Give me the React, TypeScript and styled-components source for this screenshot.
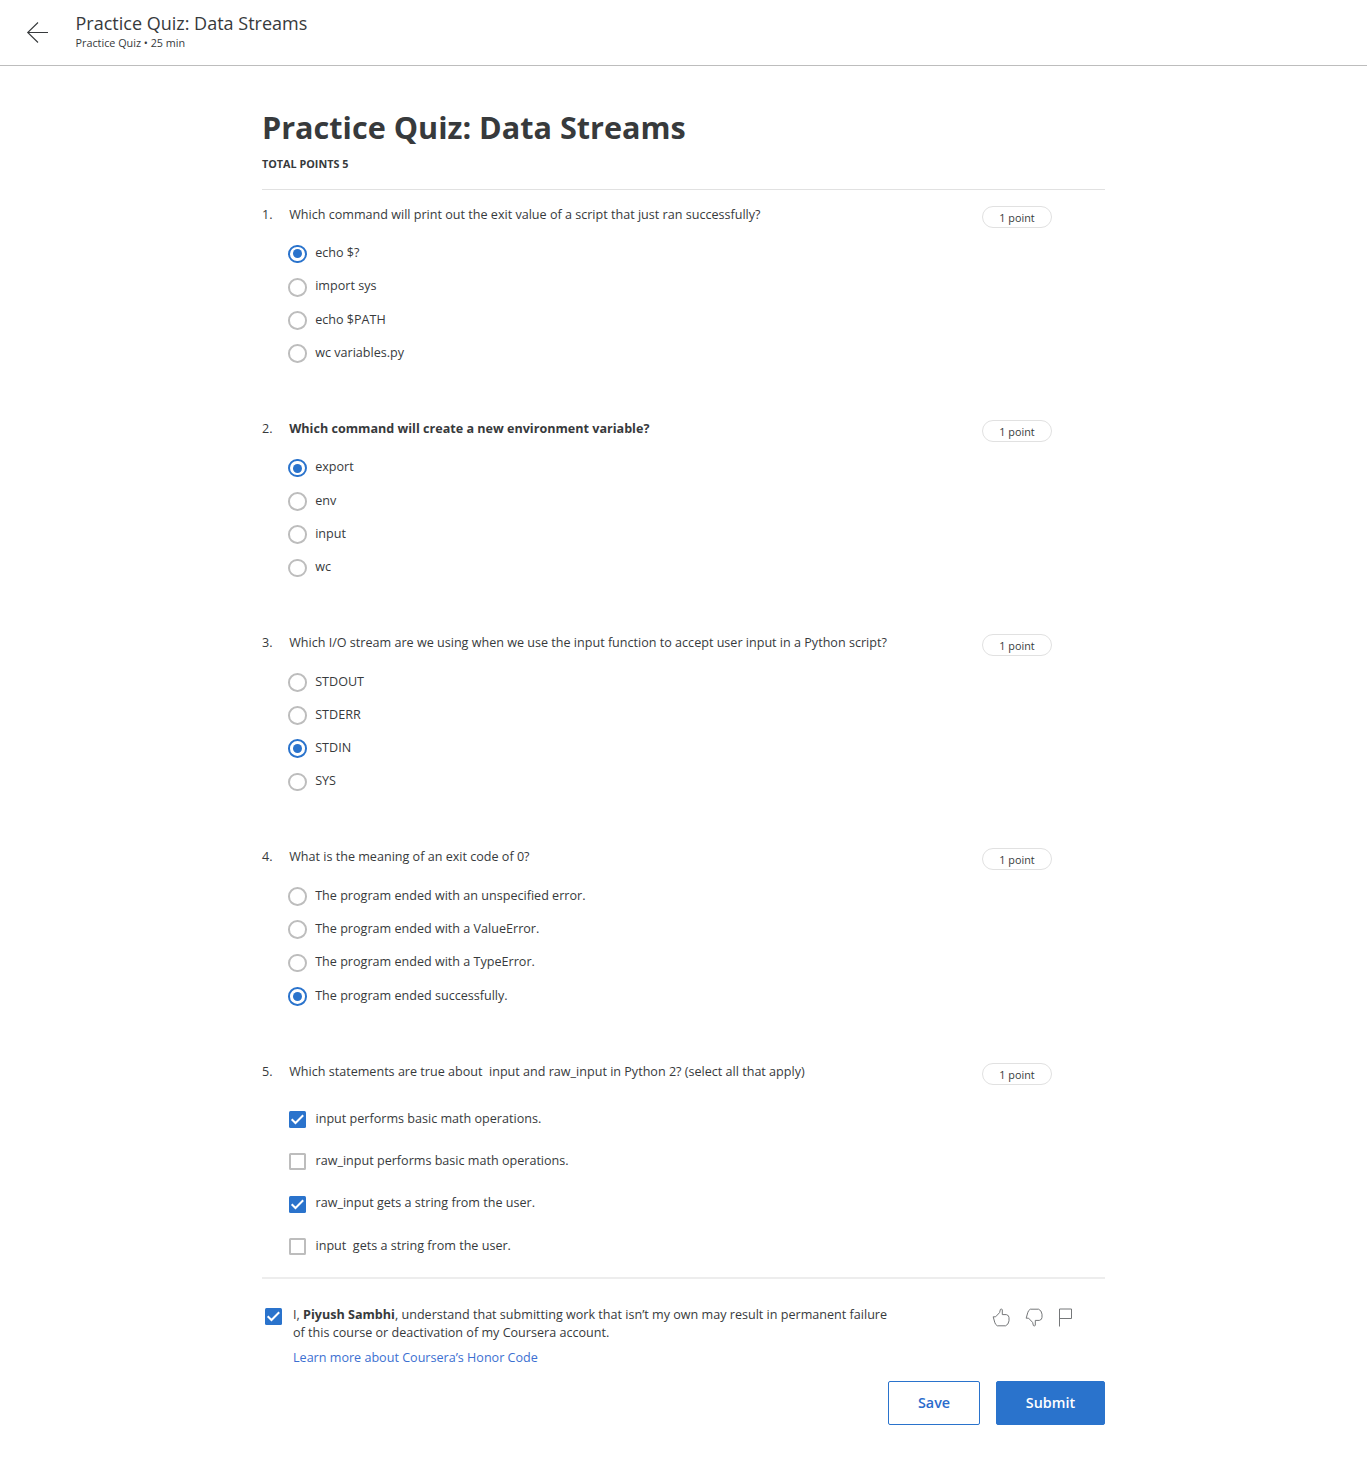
import React from "react";
import styled, { createGlobalStyle, css } from "styled-components";

const GlobalStyle = createGlobalStyle`
  * { box-sizing: border-box; }
  body {
    margin: 0;
    background: #fff;
    color: #373a3c;
    font-family: "Open Sans", "Noto Sans", sans-serif;
    font-size: 12.59px;
    line-height: 18px;
  }
`;

const Header = styled.header`
  display: flex;
  align-items: flex-start;
  height: 66px;
  padding: 12px 0 0 26px;
  border-bottom: 1px solid #bdbdbd;
`;

const BackLink = styled.a`
  display: flex;
  width: 49.5px;
  padding-top: 9px;
`;

const HeaderTitle = styled.div`
  font-size: 18px;
  line-height: 23px;
`;

const HeaderMeta = styled.div`
  font-size: 10.8px;
  line-height: 16px;
`;

const Main = styled.main`
  width: 843px;
  margin-left: 262px;
  padding-top: 39px;
`;

const Title = styled.h1`
  margin: 0;
  font-size: 30.6px;
  line-height: 44px;
  font-weight: 700;
`;

const Points = styled.div`
  height: 40px;
  padding-top: 6px;
  font-size: 10.8px;
  font-weight: 700;
`;

const Questions = styled.section`
  border-top: 1px solid #e1e1e1;
  border-bottom: 2px solid #ededed;
`;

const Question = styled.article<{ $multi?: boolean }>`
  height: ${(p) => (p.$multi ? "230.2px" : "214.2px")};
  padding-top: 15.85px;
`;

const Prompt = styled.div<{ $bold?: boolean }>`
  display: flex;
  height: 22px;
  font-weight: ${(p) => (p.$bold ? 700 : 400)};
`;

const Number = styled.span`
  width: 27.2px;
  font-weight: 400;
`;

const PromptText = styled.span`
  width: 692.8px;
  white-space: pre;
`;

const Pill = styled.span`
  width: 70px;
  height: 22px;
  border: 1px solid #e1e1e1;
  border-radius: 11px;
  font-size: 10.8px;
  font-weight: 400;
  line-height: 22px;
  text-align: center;
`;

const Options = styled.div<{ $multi?: boolean }>`
  padding: ${(p) => (p.$multi ? "13.8px" : "9.45px")} 0 0 26px;
`;

const Option = styled.label<{ $multi?: boolean }>`
  display: flex;
  align-items: center;
  height: ${(p) => (p.$multi ? "42.3px" : "33.25px")};
`;

const OptionText = styled.span`
  margin-left: 8.5px;
  padding-bottom: 1.4px;
  white-space: pre;
`;

const Radio = styled.span<{ $on: boolean }>`
  display: grid;
  place-items: center;
  width: 18.7px;
  height: 18.7px;
  border: 2px solid ${(p) => (p.$on ? "#2a73cc" : "#bdbdbd")};
  border-radius: 50%;
  ${(p) =>
    p.$on &&
    css`
      &::after {
        content: "";
        width: 9px;
        height: 9px;
        border-radius: 50%;
        background: #2a73cc;
      }
    `}
`;

const Box = styled.span<{ $on: boolean }>`
  display: grid;
  place-items: center;
  flex: none;
  width: 17px;
  height: 17px;
  margin: 0 1px;
  border: ${(p) => (p.$on ? "0" : "2px solid #bdbdbd")};
  border-radius: 1.5px;
  background: ${(p) => (p.$on ? "#2a73cc" : "#fff")};
`;

const Agreement = styled.section`
  display: flex;
  padding: 27px 0 0 2px;
`;

const ConsentCheck = styled.div`
  padding-top: 2px;
`;

const Consent = styled.div`
  width: 699px;
  margin-left: 10px;
`;

const HonorLink = styled.a`
  display: block;
  margin-top: 7px;
  color: #3c6fd1;
`;

const Feedback = styled.div`
  display: flex;
  gap: 14px;
  padding-top: 2px;
`;

const Actions = styled.div`
  display: flex;
  justify-content: flex-end;
  gap: 16px;
  margin-top: 13.6px;
  padding-bottom: 57px;
`;

const Button = styled.button<{ $primary?: boolean }>`
  width: ${(p) => (p.$primary ? "109px" : "92px")};
  height: 44px;
  padding: 0;
  border: 1px solid #2a73cc;
  border-radius: 2px;
  background: ${(p) => (p.$primary ? "#2a73cc" : "#fff")};
  color: ${(p) => (p.$primary ? "#fff" : "#2a6bcc")};
  font: 600 14.35px/42px "Open Sans", sans-serif;
`;

function Checkbox({ on }: { on: boolean }) {
  return (
    <Box $on={on}>
      {on && (
        <svg width="17" height="17" viewBox="0 0 17 17" fill="none">
          <path d="M2.7 8.2 6.5 12 14.2 4.3" stroke="#fff" strokeWidth="2" />
        </svg>
      )}
    </Box>
  );
}

type Item = { text: string; options: string[]; on: number[]; bold?: boolean; multi?: boolean };

const items: Item[] = [
  {
    text: "Which command will print out the exit value of a script that just ran successfully?",
    options: ["echo $?", "import sys", "echo $PATH", "wc variables.py"],
    on: [0],
  },
  {
    text: "Which command will create a new environment variable?",
    options: ["export", "env", "input", "wc"],
    on: [0],
    bold: true,
  },
  {
    text: "Which I/O stream are we using when we use the input function to accept user input in a Python script?",
    options: ["STDOUT", "STDERR", "STDIN", "SYS"],
    on: [2],
  },
  {
    text: "What is the meaning of an exit code of 0?",
    options: [
      "The program ended with an unspecified error.",
      "The program ended with a ValueError.",
      "The program ended with a TypeError.",
      "The program ended successfully.",
    ],
    on: [3],
  },
  {
    text: "Which statements are true about  input and raw_input in Python 2? (select all that apply)",
    options: [
      "input performs basic math operations.",
      "raw_input performs basic math operations.",
      "raw_input gets a string from the user.",
      "input  gets a string from the user.",
    ],
    on: [0, 2],
    multi: true,
  },
];

const thumb =
  "M1.2 8.8H3.6L7.6 4.6L8.4 1.4Q9.2.6 10.3 1.6V6.6H14.3Q17 7.2 17 9.6V12.8Q16.6 16.6 13.6 17.8H5.3Q3.2 16.6 2.7 14.2Z";

export default function App() {
  return (
    <>
      <GlobalStyle />
      <Header>
        <BackLink aria-label="Back">
          <svg width="23" height="23" viewBox="0 0 23 23" fill="none" stroke="#373a3c" strokeWidth="1.1">
            <path d="M22 11.5H1.5M12 1.5 1.7 11.5 12 21.5" />
          </svg>
        </BackLink>
        <div>
          <HeaderTitle>Practice Quiz: Data Streams</HeaderTitle>
          <HeaderMeta>Practice Quiz • 25 min</HeaderMeta>
        </div>
      </Header>
      <Main>
        <Title>Practice Quiz: Data Streams</Title>
        <Points>TOTAL POINTS 5</Points>
        <Questions>
          {items.map((q, i) => (
            <Question key={q.text} $multi={q.multi}>
              <Prompt $bold={q.bold}>
                <Number>{i + 1}.</Number>
                <PromptText>{q.text}</PromptText>
                <Pill>1 point</Pill>
              </Prompt>
              <Options $multi={q.multi}>
                {q.options.map((o, j) => (
                  <Option key={o} $multi={q.multi}>
                    {q.multi ? <Checkbox on={q.on.includes(j)} /> : <Radio $on={q.on.includes(j)} />}
                    <OptionText>{o}</OptionText>
                  </Option>
                ))}
              </Options>
            </Question>
          ))}
        </Questions>
        <Agreement>
          <ConsentCheck>
            <Checkbox on />
          </ConsentCheck>
          <Consent>
            I, <b>Piyush Sambhi</b>, understand that submitting work that isn’t my own may result in permanent failure
            <br />
            of this course or deactivation of my Coursera account.
            <HonorLink>Learn more about Coursera’s Honor Code</HonorLink>
          </Consent>
          <Feedback>
            <svg width="19" height="19" viewBox="0 0 19 19" fill="none" stroke="#757779">
              <path d={thumb} />
            </svg>
            <svg width="19" height="19" viewBox="0 0 19 19" fill="none" stroke="#757779">
              <path d={thumb} transform="matrix(1 0 0 -1 0 19)" />
            </svg>
            <svg width="15" height="19" viewBox="0 0 15 19" fill="none" stroke="#757779">
              <path d="M1.5 18.5V1H13.5V10.5H1.5" />
            </svg>
          </Feedback>
        </Agreement>
        <Actions>
          <Button>Save</Button>
          <Button $primary>Submit</Button>
        </Actions>
      </Main>
    </>
  );
}
